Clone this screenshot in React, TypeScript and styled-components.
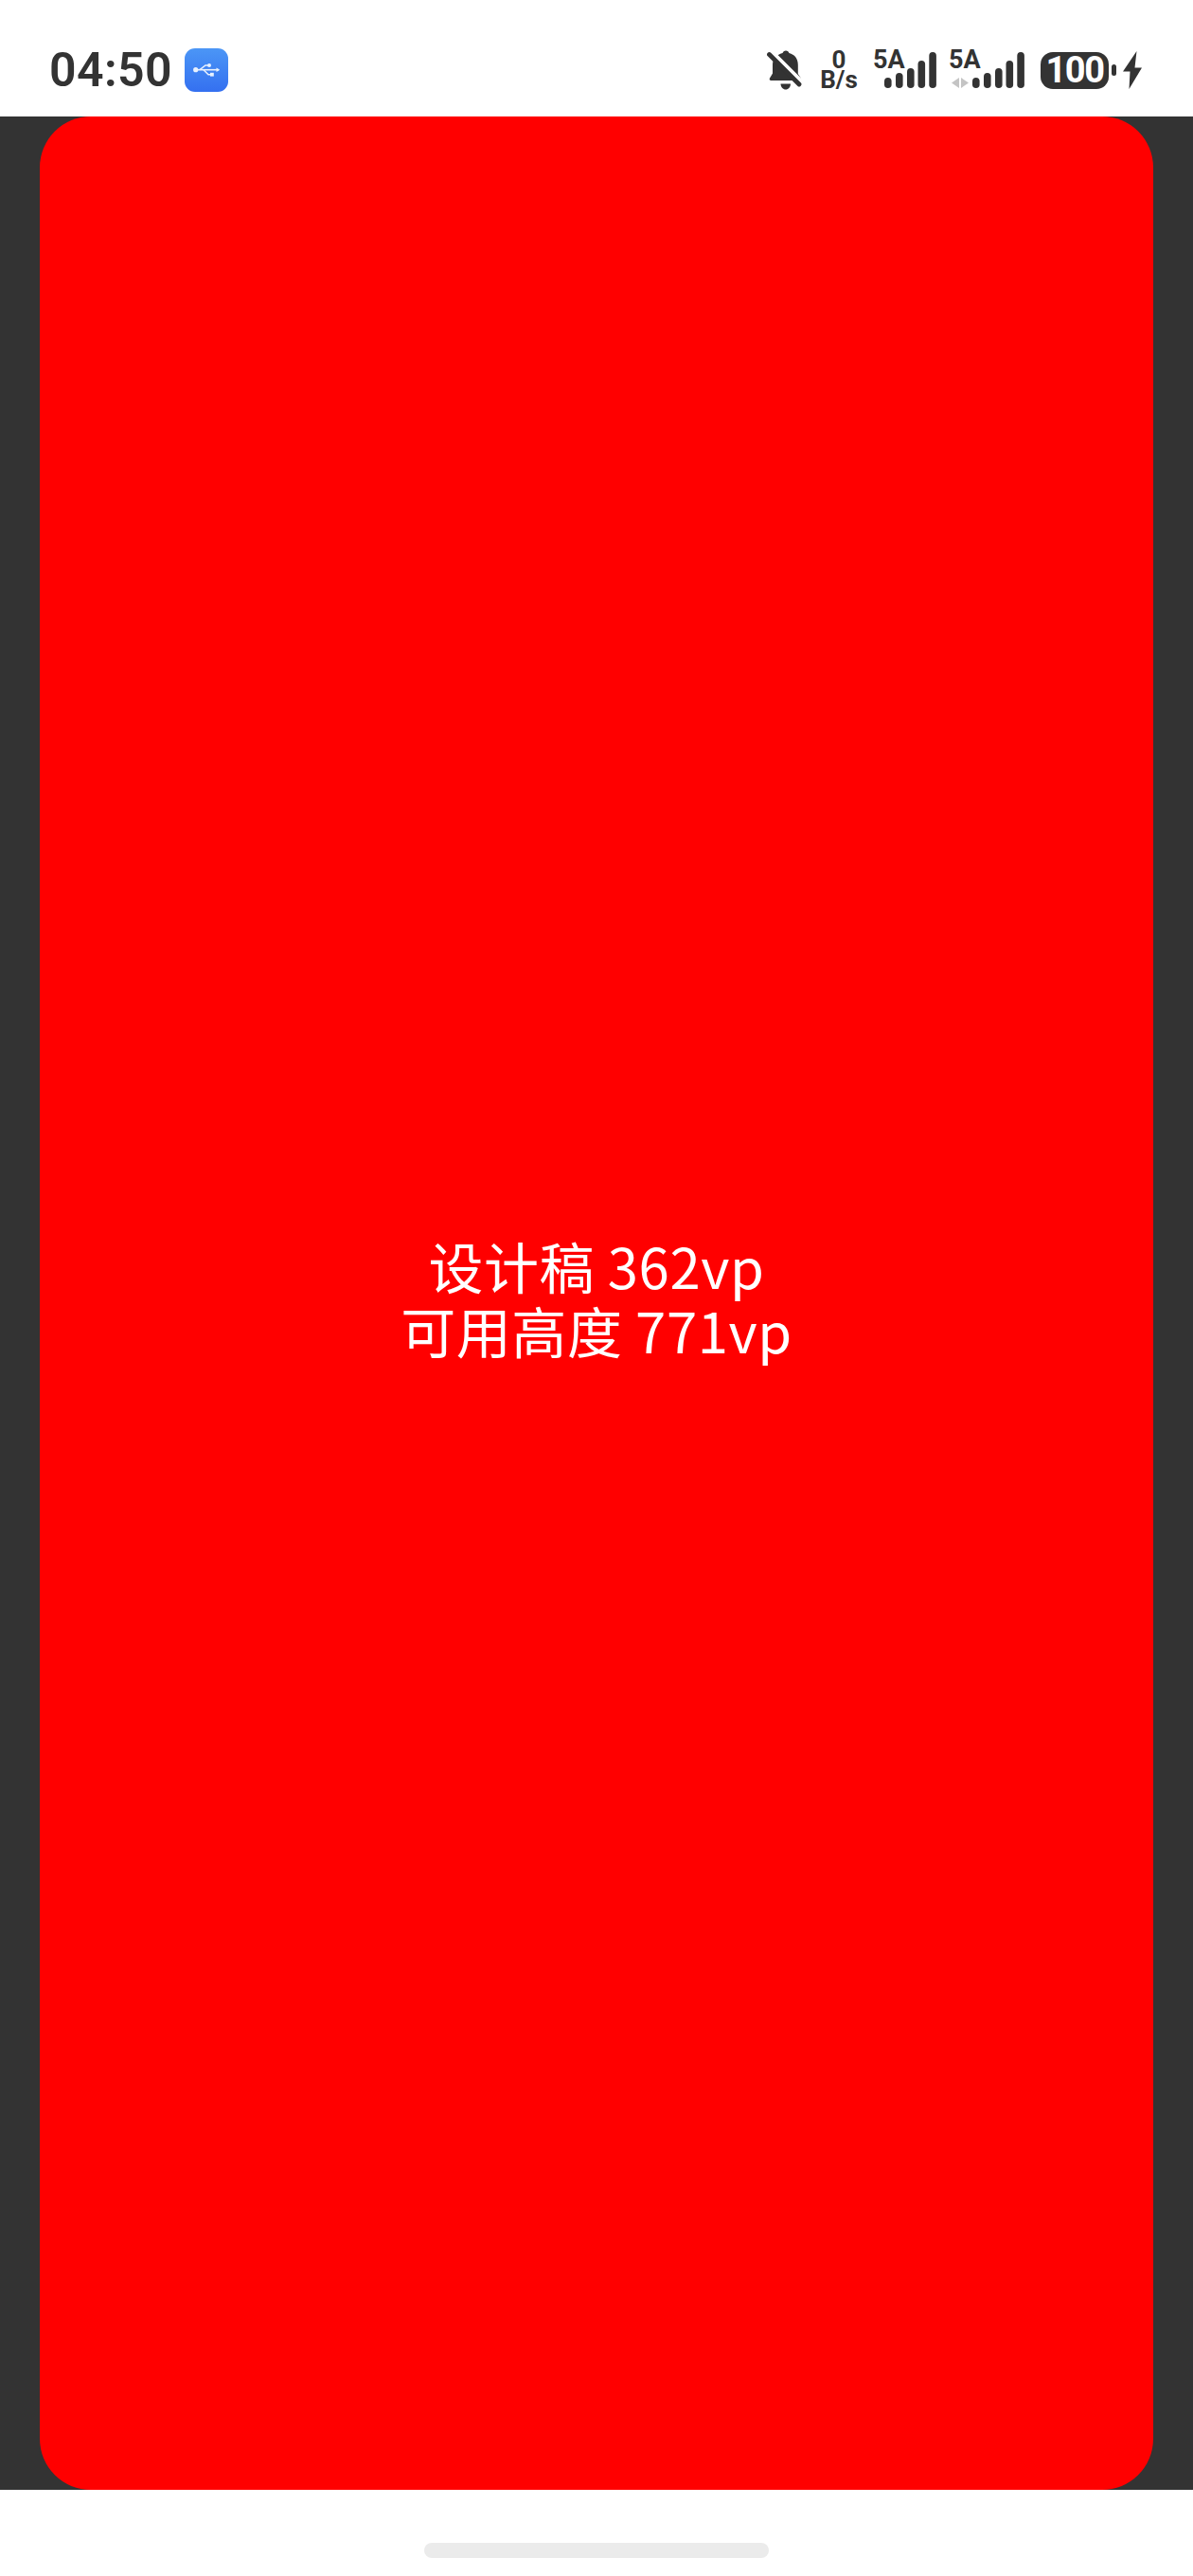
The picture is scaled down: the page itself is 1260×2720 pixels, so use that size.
import React from "react";
import styled, { createGlobalStyle } from "styled-components";

const Global = createGlobalStyle`
  html, body { margin: 0; padding: 0; background: #fff; }
  body { font-family: "Noto Sans CJK SC", "Noto Sans", sans-serif; }
`;

const Page = styled.div`
  width: 1260px;
  height: 2720px;
  display: flex;
  flex-direction: column;
  overflow: hidden;
`;

const StatusBar = styled.header`
  height: 123px;
  flex: none;
  box-sizing: border-box;
  padding: 0 54px 0 52px;
  display: flex;
  align-items: flex-start;
  justify-content: space-between;
  background: #fff;
  color: #333;
  font-family: Roboto, "Liberation Sans", sans-serif;
`;

const LeftGroup = styled.div`
  display: flex;
  align-items: center;
  gap: 13px;
  height: 46px;
  margin-top: 51px;
`;

const Time = styled.span`
  font-size: 50px;
  font-weight: 600;
  line-height: 46px;
  letter-spacing: 0.4px;
`;

const UsbBadge = styled.span`
  width: 46px;
  height: 46px;
  border-radius: 11px;
  background: linear-gradient(180deg, #4b96f6, #3470f0);
  display: block;
`;

const RightGroup = styled.div`
  display: flex;
  align-items: flex-start;
  margin-top: 53px;
  height: 42px;
`;

const BellIcon = styled.svg`
  width: 38px;
  height: 42px;
  display: block;
  margin-right: 19px;
`;

const NetSpeed = styled.div`
  width: 38px;
  margin-right: 18px;
  display: flex;
  flex-direction: column;
  align-items: center;
  font-size: 26px;
  font-weight: 700;
  line-height: 21px;
  white-space: nowrap;
`;

const Signal = styled.div<{ $pad: number; $after: number }>`
  position: relative;
  height: 41px;
  padding-left: ${(p) => p.$pad}px;
  margin-right: ${(p) => p.$after}px;
`;

const SignalLabel = styled.span`
  position: absolute;
  left: -1px;
  top: -3px;
  font-size: 27px;
  font-weight: 700;
  line-height: 26px;
`;

const Arrows = styled.svg`
  position: absolute;
  left: 2px;
  top: 29px;
  width: 18px;
  height: 11px;
`;

const BarsIcon = styled.svg`
  width: 55px;
  height: 41px;
  display: block;
`;

const Battery = styled.div`
  display: flex;
  align-items: center;
  margin-top: 1px;
`;

const BatteryBody = styled.div`
  width: 72px;
  height: 39px;
  border-radius: 13px;
  background: #333;
  color: #fff;
  font-size: 38px;
  font-weight: 700;
  line-height: 39px;
  text-align: center;
  letter-spacing: -1.4px;
`;

const BatteryCap = styled.span`
  width: 5px;
  height: 12px;
  border-radius: 2.5px;
  margin-left: 3px;
  background: #333;
`;

const BoltIcon = styled.svg`
  width: 20px;
  height: 40px;
  display: block;
  margin-left: 7px;
`;

const Stage = styled.main`
  flex: 1;
  min-height: 0;
  box-sizing: border-box;
  padding: 0 42px;
  display: flex;
  background: #333;
`;

const Panel = styled.section`
  flex: 1;
  border-radius: 54px;
  background: #ff0000;
  color: #fff;
  display: flex;
  flex-direction: column;
  align-items: center;
  justify-content: center;
  font-size: 58px;
  line-height: 68px;
  letter-spacing: 0.6px;
  font-weight: 400;
  padding-bottom: 12px;
  box-sizing: border-box;
`;

const NavArea = styled.footer`
  height: 91px;
  flex: none;
  background: #fff;
  display: flex;
  justify-content: center;
  padding-top: 56px;
  box-sizing: border-box;
`;

const HomeBar = styled.div`
  width: 364px;
  height: 16px;
  border-radius: 8px;
  background: #ebebeb;
`;

const Bars = () => (
  <BarsIcon viewBox="0 0 55 41" fill="#333">
    <rect x="0" y="29" width="7.6" height="11" rx="3.8" />
    <rect x="12" y="24" width="7.6" height="16" rx="3.8" />
    <rect x="24" y="19" width="7.6" height="21" rx="3.8" />
    <rect x="35.5" y="11" width="7.6" height="29" rx="3.8" />
    <rect x="47.3" y="2" width="7.6" height="38" rx="3.8" />
  </BarsIcon>
);

export default function App() {
  return (
    <Page>
      <Global />
      <StatusBar>
        <LeftGroup>
          <Time>04:50</Time>
          <UsbBadge>
            <svg width="46" height="46" viewBox="0 0 46 46" fill="#e8f1fe" stroke="#e8f1fe">
              <path d="M12 22.7H36" strokeWidth="1.6" fill="none" />
              <path d="M16 22.7L22 18H25M20 22.7L25 27.7H28" strokeWidth="1.5" fill="none" />
              <circle cx="11.7" cy="22.7" r="2.6" stroke="none" />
              <circle cx="26" cy="18" r="2" stroke="none" />
              <rect x="27" y="25.8" width="3.8" height="3.8" stroke="none" />
              <path d="M33.5 20.4L37.2 22.7L33.5 25Z" stroke="none" />
            </svg>
          </UsbBadge>
        </LeftGroup>
        <RightGroup>
          <BellIcon viewBox="0 0 38 42">
            <path
              d="M20 0.5c1.7 0 3 1 3.4 2.6 5.8 1.4 9.4 6 9.4 12.4v9.5l3.2 4.7c.5 1 0 2.3-1.3 2.3H4.4c-1.4 0-2.2-1.5-1.4-2.6L6 24.5V15.5c0-5.6 3.6-10.6 10.6-12.4C17 1.5 18.3.5 20 .5z"
              fill="#333"
            />
            <path d="M14.5 35.5h10.5c0 3.400-2.400 6-5.200 6s-5.300-2.600-5.300-6z" fill="#333" />
            <path d="M4 1L38 35" stroke="#fff" strokeWidth="5" />
            <path d="M2.500 4.500L34 36" stroke="#333" strokeWidth="4.800" strokeLinecap="round" />
          </BellIcon>
          <NetSpeed>
            <span>0</span>
            <span>B/s</span>
          </NetSpeed>
          <Signal $pad={11} $after={14}>
            <SignalLabel>5A</SignalLabel>
            <Bars />
          </Signal>
          <Signal $pad={24} $after={17}>
            <SignalLabel>5A</SignalLabel>
            <Arrows viewBox="0 0 18 11" fill="#c4c4c4">
              <path d="M8 0V11L0 5.500Z" />
              <path d="M10 0V11L18 5.500Z" />
            </Arrows>
            <Bars />
          </Signal>
          <Battery>
            <BatteryBody>100</BatteryBody>
            <BatteryCap />
            <BoltIcon viewBox="0 0 20 40" fill="#333">
              <path d="M14.500 0L0 21.500H7.500L6.500 40L20 17.500H12.500Z" />
            </BoltIcon>
          </Battery>
        </RightGroup>
      </StatusBar>
      <Stage>
        <Panel>
          <span>设计稿 362vp</span>
          <span>可用高度 771vp</span>
        </Panel>
      </Stage>
      <NavArea>
        <HomeBar />
      </NavArea>
    </Page>
  );
}
